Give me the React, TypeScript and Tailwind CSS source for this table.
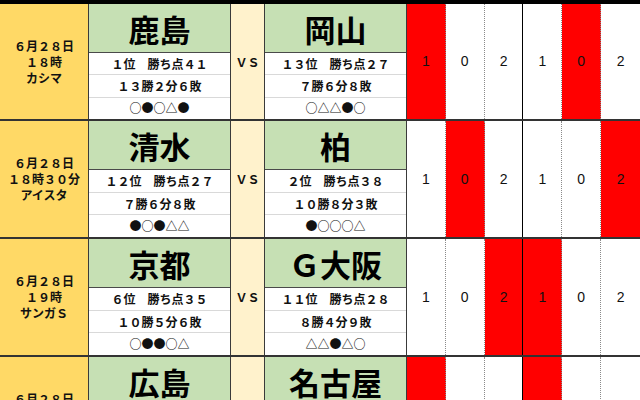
import React from 'react';

type Team = { name: string; rank: string; record: string; form: string };

type Match = {
  date: string[];
  home: Team;
  away: Team;
  red: number[];
  height: string;
};

const matches: Match[] = [
  {
    date: ['６月２８日', '１８時', 'カシマ'],
    home: { name: '鹿島', rank: '１位　勝ち点４１', record: '１３勝２分６敗', form: '○●○△●' },
    away: { name: '岡山', rank: '１３位　勝ち点２７', record: '７勝６分８敗', form: '○△△●○' },
    red: [0, 4],
    height: 'h-[117px]',
  },
  {
    date: ['６月２８日', '１８時３０分', 'アイスタ'],
    home: { name: '清水', rank: '１２位　勝ち点２７', record: '７勝６分８敗', form: '●○●△△' },
    away: { name: '柏', rank: '２位　勝ち点３８', record: '１０勝８分３敗', form: '●○○○△' },
    red: [1, 5],
    height: 'h-[118px]',
  },
  {
    date: ['６月２８日', '１９時', 'サンガＳ'],
    home: { name: '京都', rank: '６位　勝ち点３５', record: '１０勝５分６敗', form: '○●●○△' },
    away: { name: 'Ｇ大阪', rank: '１１位　勝ち点２８', record: '８勝４分９敗', form: '△△●△○' },
    red: [2, 3],
    height: 'h-[118px]',
  },
  {
    date: ['６月２８日', '１９時', 'Ｅスタ'],
    home: { name: '広島', rank: '４位　勝ち点３６', record: '１０勝６分５敗', form: '○○●△○' },
    away: { name: '名古屋', rank: '１６位　勝ち点２２', record: '５勝７分９敗', form: '●△○●△' },
    red: [0, 3],
    height: 'h-[118px]',
  },
];

const scores = ['1', '0', '2', '1', '0', '2'];

const jp = { fontFamily: '"Noto Sans CJK JP", "Liberation Sans", sans-serif' };

function TeamCell({ team, width }: { team: Team; width: string }) {
  return (
    <div className={`${width} flex flex-col border-r border-[#3a3a3a] bg-white`}>
      <div className="h-[49px] flex items-center justify-center bg-[#c6e0b4] border-b border-[#4a4a4a]">
        <span className="text-[31px] font-bold leading-none text-black">{team.name}</span>
      </div>
      <div className="flex-1 flex flex-col text-[12px] font-bold text-[#111]">
        <div className="flex-1 flex items-center justify-center border-b border-[#d9d9d9]">{team.rank}</div>
        <div className="flex-1 flex items-center justify-center border-b border-[#d9d9d9]">{team.record}</div>
        <div className="flex-1 flex items-center justify-center">{team.form}</div>
      </div>
    </div>
  );
}

export default function App() {
  return (
    <div className="w-[640px] h-[400px] overflow-hidden bg-white" style={jp}>
      <div className="h-[4px] bg-black" />
      {matches.map((m, i) => (
        <div key={i} className={`${m.height} flex border-b-2 border-[#333]`}>
          {/* Date */}
          <div className="w-[89px] flex flex-col items-center justify-center bg-[#ffd966] border-r border-[#3a3a3a] text-[12px] font-bold leading-[16px] text-[#111]">
            {m.date.map((d, j) => (
              <span key={j}>{d}</span>
            ))}
          </div>

          <TeamCell team={m.home} width="w-[142px]" />

          {/* VS */}
          <div className="w-[34px] flex items-center justify-center bg-[#fff2cc] border-r border-[#3a3a3a] text-[12px] font-bold text-[#111]">
            ＶＳ
          </div>

          <TeamCell team={m.away} width="w-[142px]" />

          {/* Scores */}
          <div className="flex-1 grid grid-cols-6">
            {scores.map((s, k) => (
              <div
                key={k}
                className={`flex items-center justify-center text-[14px] text-[#111] ${
                  m.red.includes(k) ? 'bg-[#ff0000]' : 'bg-white'
                } ${k === 2 ? 'border-r border-black' : k < 5 ? 'border-r border-dotted border-[#8a8a8a]' : ''}`}
                style={{ fontFamily: '"Liberation Sans", sans-serif' }}
              >
                {s}
              </div>
            ))}
          </div>
        </div>
      ))}
    </div>
  );
}
